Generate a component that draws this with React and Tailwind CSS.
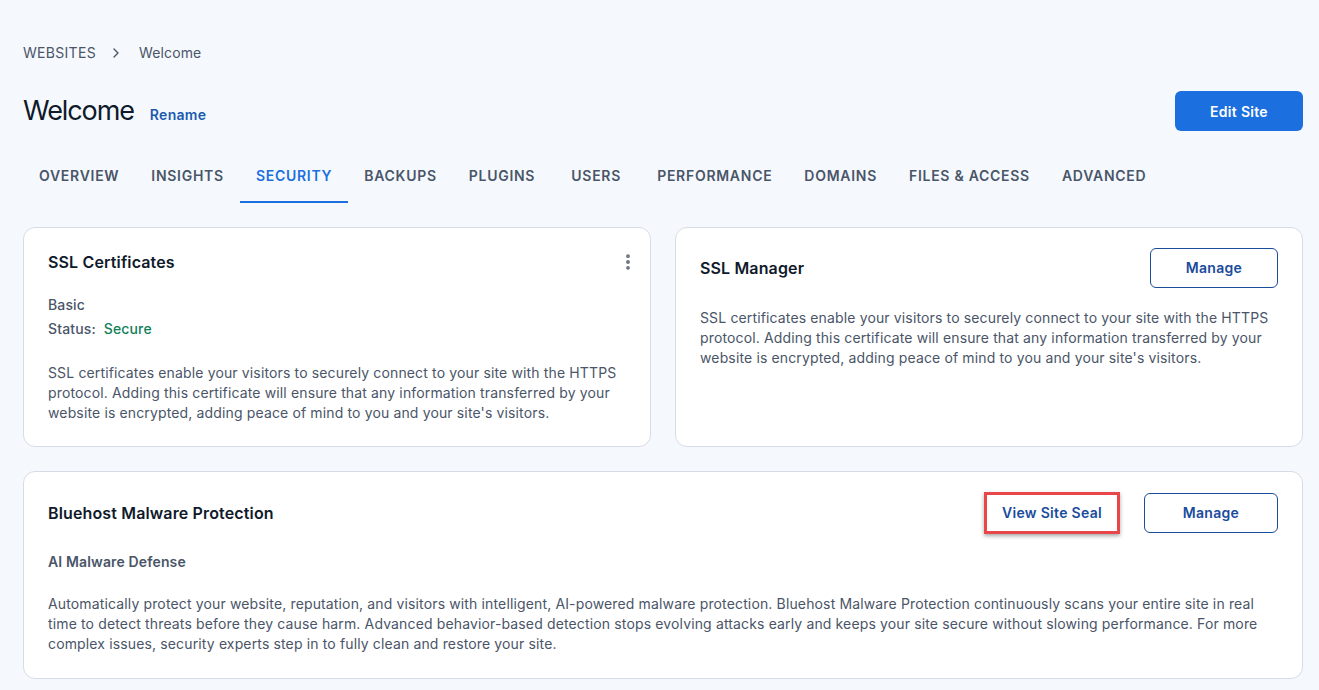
import React from 'react';
import { ChevronRight, EllipsisVertical } from 'lucide-react';

const tabs = ['Overview', 'Insights', 'Security', 'Backups', 'Plugins', 'Users', 'Performance', 'Domains', 'Files & Access', 'Advanced'];

const sslCopy =
  "SSL certificates enable your visitors to securely connect to your site with the HTTPS protocol. Adding this certificate will ensure that any information transferred by your website is encrypted, adding peace of mind to you and your site's visitors.";

function OutlineButton({ children, className = '' }) {
  return (
    <button className={`h-10 rounded-md border border-[#1a4c9c] bg-white text-sm font-semibold text-[#1a4c9c] tracking-[0.3px] ${className}`}>
      {children}
    </button>
  );
}

export default function App() {
  return (
    <div className="min-h-screen bg-[#f5f9fd] pl-[23px] pr-4 pt-[43px] pb-6 font-['Inter','Noto_Sans',sans-serif] tracking-[0.14px] text-[#1f2937]">
      {/* breadcrumb */}
      <div className="flex items-center text-sm leading-5 text-[#4a5568]">
        <span className="tracking-[0.3px]">WEBSITES</span>
        <ChevronRight size={16} strokeWidth={2} className="ml-3 mr-[15px] text-[#4a5568]" />
        <span>Welcome</span>
      </div>

      {/* title row */}
      <div className="mt-7 flex items-center justify-between">
        <div className="flex items-baseline gap-4">
          <h1 className="text-[27px] leading-9 font-normal tracking-[-1.1px] text-[#0f1a2b]">Welcome</h1>
          <button className="text-sm font-semibold text-[#1a5bb0] tracking-[0.3px]">Rename</button>
        </div>
        <button className="h-10 w-32 rounded-md bg-[#1b6fdf] pt-[2px] text-sm font-semibold text-white tracking-[0.3px]">Edit Site</button>
      </div>

      {/* tabs */}
      <div className="mt-[35px] flex">
        {tabs.map((t) => {
          const active = t === 'Security';
          return (
            <div
              key={t}
              className={`min-w-[90px] px-4 pb-[15px] text-center text-sm leading-5 font-semibold uppercase tracking-[0.72px] border-b-2 ${
                active ? 'border-[#1b6fdf] text-[#1b6fdf]' : 'border-transparent text-[#4a5568]'
              }`}
            >
              {t}
            </div>
          );
        })}
      </div>

      {/* SSL cards */}
      <div className="mt-6 grid grid-cols-2 gap-6">
        <div className="rounded-xl border border-[#d6dce6] bg-white px-6 pt-[22px] pb-[23px]">
          <div className="flex items-center justify-between">
            <h2 className="text-base leading-6 font-semibold text-[#0f1a2b]">SSL Certificates</h2>
            <EllipsisVertical size={20} strokeWidth={2.6} className="-mr-[12px] text-[#6b7280]" />
          </div>
          <div className="mt-[21px] text-sm leading-5 font-medium text-[#4a5568]">Basic</div>
          <div className="mt-1 text-sm leading-5 font-medium text-[#4a5568]">
            Status:<span className="ml-2 text-[#12805a]">Secure</span>
          </div>
          <p className="mt-6 text-sm leading-5 text-[#4a5568]">{sslCopy}</p>
        </div>

        <div className="rounded-xl border border-[#d6dce6] bg-white px-6 pt-5 pb-6">
          <div className="flex items-center justify-between">
            <h2 className="text-base leading-6 font-semibold text-[#0f1a2b]">SSL Manager</h2>
            <OutlineButton className="w-32">Manage</OutlineButton>
          </div>
          <p className="mt-5 text-sm leading-5 text-[#4a5568]">{sslCopy}</p>
        </div>
      </div>

      {/* malware card */}
      <div className="mt-6 rounded-xl border border-[#d6dce6] bg-white px-6 pt-5 pb-6">
        <div className="flex items-center justify-between">
          <h2 className="text-base leading-6 font-semibold text-[#0f1a2b]">Bluehost Malware Protection</h2>
          <div className="flex items-center gap-6">
            <button className="h-[42px] w-[136px] border-[3px] border-[#e8474a] bg-white text-sm font-semibold text-[#1a4c9c] tracking-[0.3px] shadow-[0_2px_4px_rgba(0,0,0,0.35)]">
              View Site Seal
            </button>
            <OutlineButton className="w-[134px]">Manage</OutlineButton>
          </div>
        </div>
        <div className="mt-[18px] text-sm leading-5 font-semibold text-[#4a5568]">AI Malware Defense</div>
        <p className="mt-[22px] text-sm leading-5 text-[#4a5568]">
          Automatically protect your website, reputation, and visitors with intelligent, AI-powered malware protection. Bluehost Malware Protection continuously scans your entire site in real time to detect threats before they cause harm. Advanced behavior-based detection stops evolving attacks early and keeps your site secure without slowing performance. For more complex issues, security experts step in to fully clean and restore your site.
        </p>
      </div>
    </div>
  );
}
